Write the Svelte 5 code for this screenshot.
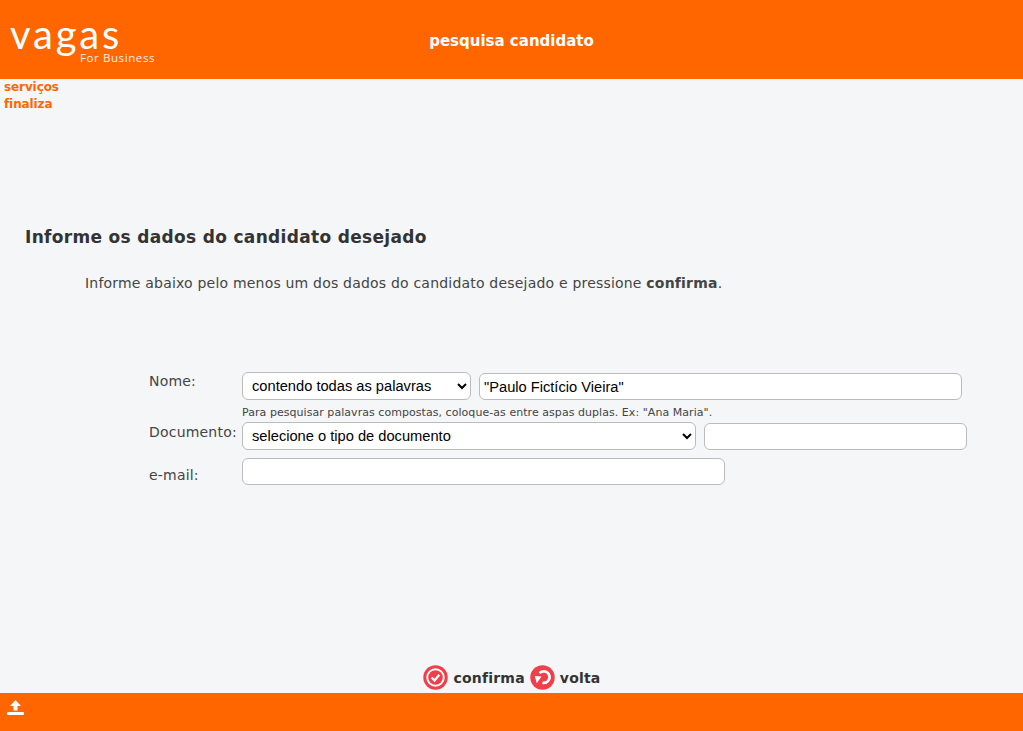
<script>
  let nome = $state('"Paulo Fictício Vieira"');
  let documento = $state("");
  let email = $state("");
</script>

<div class="page">
  <header class="topbar">
    <div class="logo">
      <span class="wordmark">vagas</span>
      <span class="sub">For Business</span>
    </div>
    <h1>pesquisa candidato</h1>
  </header>

  <nav class="links">
    <a href="#servicos">serviços</a>
    <a href="#finaliza">finaliza</a>
  </nav>

  <main>
    <h2>Informe os dados do candidato desejado</h2>
    <p class="intro">Informe abaixo pelo menos um dos dados do candidato desejado e pressione <b>confirma</b>.</p>

    <form class="fields">
      <div class="row row-nome">
        <label for="nome">Nome:</label>
        <div class="col">
          <div class="controls">
            <select class="sel-nome">
              <option>contendo todas as palavras</option>
            </select>
            <input id="nome" class="inp-nome" type="text" bind:value={nome} />
          </div>
          <small>Para pesquisar palavras compostas, coloque-as entre aspas duplas. Ex: "Ana Maria".</small>
        </div>
      </div>
      <div class="row row-doc">
        <label for="doc">Documento:</label>
        <div class="controls">
          <select class="sel-doc">
            <option>selecione o tipo de documento</option>
          </select>
          <input id="doc" class="inp-doc" type="text" bind:value={documento} />
        </div>
      </div>
      <div class="row row-mail">
        <label for="mail">e-mail:</label>
        <input id="mail" class="inp-mail" type="text" bind:value={email} />
      </div>
    </form>

    <div class="actions">
      <a href="#confirma">
        <svg width="25" height="25" viewBox="0 0 26 26">
          <circle cx="13" cy="13" r="12.7" fill="#ee3f4a" />
          <circle cx="13" cy="13" r="8.6" fill="none" stroke="#fff" stroke-width="2" />
          <path d="M9 13l3 3.200 5-6" fill="none" stroke="#fff" stroke-width="2.400" />
        </svg>
        confirma
      </a>
      <a href="#volta">
        <svg width="25" height="25" viewBox="0 0 26 26">
          <circle cx="13" cy="13" r="12.700" fill="#ee3f4a" />
          <path d="M10 8.500A6 6 0 1 1 13 18.500" fill="none" stroke="#fff" stroke-width="2.800" />
          <path d="M5 11.500l7 .5-5 7z" fill="#fff" />
        </svg>
        volta
      </a>
    </div>
  </main>

  <footer class="bottombar">
    <svg width="17" height="18" viewBox="0 0 17 18">
      <path d="M8.500 1l5.500 6h-3.500v4.500h-4V7H3z" fill="#fff" />
      <rect y="13" width="17" height="3" rx="1" fill="#fff" />
    </svg>
  </footer>
</div>

<style>
  :global(body) {
    margin: 0;
    background: #f4f6f8;
  }

  .page {
    display: flex;
    flex-direction: column;
    height: 731px;
    font-family: "DejaVu Sans", Verdana, sans-serif;
    color: #333;
    overflow: hidden;
  }

  .topbar {
    height: 79px;
    background: #ff6600;
    display: grid;
    grid-template-columns: 1fr auto 1fr;
    align-items: center;
    color: #fff;
  }

  .logo {
    position: relative;
    height: 79px;
  }

  .wordmark {
    position: absolute;
    left: 10px;
    top: 21px;
    font-family: "Lato", sans-serif;
    font-weight: 400;
    font-size: 40px;
    line-height: 26px;
    letter-spacing: 2.800px;
  }

  .sub {
    position: absolute;
    left: 80px;
    top: 51px;
    font-family: "Open Sans", sans-serif;
    font-size: 11.500px;
    line-height: 14px;
    letter-spacing: 0.6px;
    opacity: 0.9;
    white-space: nowrap;
  }

  h1 {
    margin: 0;
    padding-top: 2px;
    font-size: 15px;
    font-weight: bold;
  }

  .links {
    display: flex;
    flex-direction: column;
    padding: 0 0 0 4px;
    height: 36px;
  }

  .links a {
    font-size: 12px;
    font-weight: bold;
    line-height: 17px;
    letter-spacing: -0.1px;
    color: #ff6600;
    text-decoration: none;
  }

  main {
    flex: 1;
    display: flex;
    flex-direction: column;
    min-height: 0;
  }

  h2 {
    margin: 111px 0 0 25px;
    font-size: 17px;
    line-height: 22px;
    font-weight: bold;
    letter-spacing: 0.32px;
    color: #333;
  }

  .intro {
    margin: 25px 0 0 85px;
    font-size: 14px;
    line-height: 20px;
    letter-spacing: 0.2px;
    color: #444;
  }

  .fields {
    margin: 79px 0 0 149px;
    display: flex;
    flex-direction: column;
  }

  .row {
    display: flex;
    align-items: flex-start;
  }

  label {
    width: 93px;
    font-size: 14px;
    line-height: 18px;
    letter-spacing: 0.2px;
    color: #444;
  }

  .row-doc {
    margin-top: 3px;
  }

  .row-doc label {
    padding-top: 1px;
  }

  .row-mail {
    margin-top: 8px;
  }

  .row-mail label {
    padding-top: 8px;
  }

  .controls {
    display: flex;
    align-items: flex-start;
    gap: 8px;
  }

  .controls input {
    margin-top: 1px;
  }

  small {
    display: block;
    font-size: 11px;
    line-height: 13px;
    margin-top: 6px;
    letter-spacing: 0.05px;
    color: #444;
  }

  select,
  input {
    box-sizing: border-box;
    border: 1px solid #bbb;
    border-radius: 6px;
    background: #fff;
    font-family: "Liberation Sans", Arial, sans-serif;
    font-size: 14.67px;
    color: #000;
    margin: 0;
  }

  select {
    height: 28px;
    padding: 0 4px 0 5px;
  }

  input {
    height: 27px;
    padding: 0 4px;
  }

  .sel-nome { width: 229px; }
  .inp-nome { width: 483px; }
  .sel-doc { width: 454px; }
  .inp-doc { width: 263px; }
  .inp-mail { width: 483px; }

  .actions {
    margin-top: auto;
    height: 31px;
    display: flex;
    justify-content: center;
    align-items: center;
    gap: 5px;
    padding-left: 1px;
  }

  .actions a {
    display: flex;
    align-items: center;
    gap: 5px;
    font-size: 14px;
    font-weight: bold;
    letter-spacing: 0.2px;
    color: #333;
    text-decoration: none;
  }

  .bottombar {
    height: 38px;
    background: #ff6600;
    display: flex;
    align-items: flex-start;
    padding: 6px 0 0 7px;
    box-sizing: border-box;
  }
</style>
